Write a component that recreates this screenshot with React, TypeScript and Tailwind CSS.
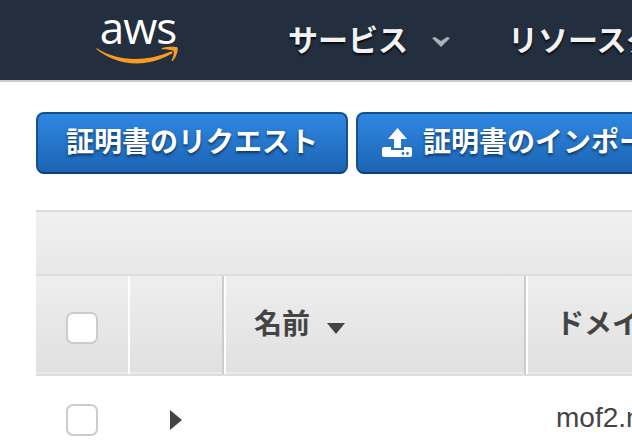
const JP = "font-['Helvetica_Neue','Liberation_Sans','Noto_Sans_CJK_JP',sans-serif]";

const AwsLogo = () => (
  <div className="flex flex-col items-center w-[84px]">
    <span className="font-['Open_Sans',sans-serif] font-medium text-[44px] leading-[60px] h-[26px] flex items-center text-white tracking-[-1px]">aws</span>
    <svg width="84" height="20" viewBox="0 0 84 20" className="mt-[5px]">
      <path d="M0.5 3C12 10.5 25 14 39 14C51 14 63 11.5 75 6.5C76.5 6 77.5 7.5 76 8.5C65 15 52 18.5 41 18.5C25 18.5 11 12.5 0.5 4.2Z" fill="#f89c24" />
      <path d="M66 3C70 2 79 1.3 81.5 2.5C82.5 5.5 80 13 76.5 16C75.5 16.5 75.5 15.5 76 14.5C77 12 78.5 7.5 77.5 6C76.5 4.7 70.5 4.5 66.5 4.2C65.5 4 65.3 3.5 66 3Z" fill="#f89c24" />
    </svg>
  </div>
);

const UploadIcon = () => (
  <svg width="30" height="30" viewBox="0 0 30 30" className="shrink-0">
    <path d="M15.5 0L25 11H19V20H12V11H6Z" fill="#fff" />
    <path d="M2 19H9V22H22V19H28C29 19 30 20 30 21V27C30 28 29 29 28 29H2C1 29 0 28 0 27V21C0 20 1 19 2 19Z" fill="#fff" />
    <circle cx="21" cy="25.5" r="1.4" fill="#2a6fc0" />
    <circle cx="25.5" cy="25.5" r="1.4" fill="#2a6fc0" />
  </svg>
);

const Checkbox = ({ className }: { className: string }) => (
  <div className={`w-8 h-8 rounded-[7px] border-2 border-[#cccccc] bg-white shrink-0 ${className}`} />
);

const BlueButton = ({ children, className }: { children: React.ReactNode; className: string }) => (
  <button className={`h-[62px] shrink-0 flex items-center rounded-[8px] border-2 border-[#15508f] border-b-[#0f4077] bg-gradient-to-b from-[#2f88e2] to-[#1c64b4] text-white text-[28px] leading-none font-bold whitespace-nowrap [text-shadow:0_2px_3px_rgba(0,0,0,0.55)] ${className}`}>
    {children}
  </button>
);

export default function App() {
  return (
    <div className={`w-[632px] h-[446px] overflow-hidden bg-white ${JP}`}>
      <header className="h-[82px] bg-[#232f3e] border-b-2 border-[#cccccc] flex items-center whitespace-nowrap overflow-hidden">
        <div className="ml-[96px] mt-[-1px]">
          <AwsLogo />
        </div>
        <span className="ml-[108px] text-[30px] font-bold text-[#f2f2f2] [text-shadow:0_2px_2px_rgba(0,0,0,0.8)]">サービス</span>
        <svg width="18" height="10" viewBox="0 0 18 10" className="ml-[24px] mt-[4px] shrink-0">
          <path d="M0 1L3 0L9 4L15 0L18 1L9 10Z" fill="#aab0b7" />
        </svg>
        <span className="ml-[58px] text-[30px] font-bold text-[#f2f2f2] [text-shadow:0_2px_2px_rgba(0,0,0,0.8)]">リソースグループ</span>
      </header>

      <div className="flex gap-2 pl-9 pt-[30px] overflow-hidden">
        <BlueButton className="w-[312px] justify-center">証明書のリクエスト</BlueButton>
        <BlueButton className="pl-6 pr-6 gap-3">
          <UploadIcon />
          <span className="ml-[-1px]">証明書のインポート</span>
        </BlueButton>
      </div>

      <div className="ml-9 mt-9 overflow-hidden">
        <div className="h-[64px] border-t-2 border-[#dddddd] bg-gradient-to-b from-[#f0f0f0] to-[#e8e8e8]" />
        <div className="h-[102px] flex border-y-2 border-[#dddddd] bg-gradient-to-b from-[#eeeeee] to-[#e0e0e0] shadow-[inset_0_-2px_0_#eaeaea] text-[#444444] text-[28px] font-bold whitespace-nowrap">
          <div className="w-[94px] shrink-0 flex items-center justify-center border-r-2 border-white">
            <Checkbox className="mt-[6px]" />
          </div>
          <div className="w-[94px] shrink-0 border-r-2 border-[#cccccc]" />
          <div className="w-[302px] shrink-0 flex items-center pl-7 border-l-2 border-r-2 border-l-white border-r-[#cccccc]">
            名前
            <svg width="18" height="11" viewBox="0 0 18 11" className="ml-[17px] mt-[6px]">
              <path d="M0 0H18L9 11Z" fill="#444444" />
            </svg>
          </div>
          <div className="flex-1 flex items-center pl-7 border-l-2 border-white">ドメイン名</div>
        </div>
        <div className="flex items-center h-[88px] text-[28px] text-[#444444] whitespace-nowrap">
          <div className="w-[92px] shrink-0 flex justify-center">
            <Checkbox className="" />
          </div>
          <div className="w-[94px] shrink-0 flex justify-center">
            <svg width="12" height="20" viewBox="0 0 12 20" className="ml-[2px]">
              <path d="M0 0L12 10L0 20Z" fill="#444444" />
            </svg>
          </div>
          <div className="w-[334px] shrink-0" />
          <span className="mt-[-4px]">mof2.net</span>
        </div>
      </div>
    </div>
  );
}
